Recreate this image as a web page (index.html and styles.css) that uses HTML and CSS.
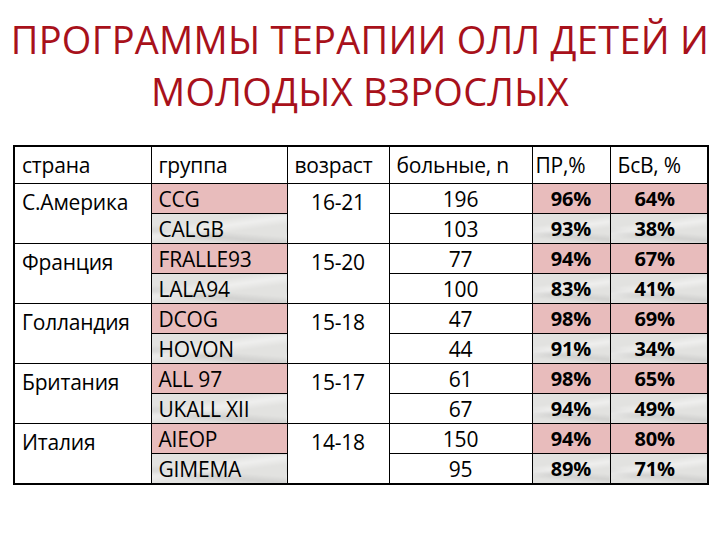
FILE: index.html
```html
<!DOCTYPE html>
<html lang="ru">
<head>
<meta charset="utf-8">
<title>Программы терапии ОЛЛ</title>
<link rel="stylesheet" href="styles.css">
</head>
<body>
<h1 class="title">ПРОГРАММЫ ТЕРАПИИ ОЛЛ ДЕТЕЙ И<br>МОЛОДЫХ ВЗРОСЛЫХ</h1>
<table class="grid">
  <colgroup>
    <col class="c-country"><col class="c-group"><col class="c-age"><col class="c-n"><col class="c-pr"><col class="c-bsv">
  </colgroup>
  <thead>
    <tr class="head">
      <th>страна</th><th>группа</th><th>возраст</th><th>больные, n</th><th class="pr-h">ПР,%</th><th>БсВ, %</th>
    </tr>
  </thead>
  <tbody>
    <tr class="r1"><td class="country" rowspan="2">С.Америка</td><td class="grp pink">CCG</td><td class="age" rowspan="2">16-21</td><td class="n">196</td><td class="pct pink">96%</td><td class="pct pink">64%</td></tr>
    <tr class="r2"><td class="grp gray">CALGB</td><td class="n">103</td><td class="pct gray">93%</td><td class="pct gray">38%</td></tr>
    <tr class="r1"><td class="country" rowspan="2">Франция</td><td class="grp pink">FRALLE93</td><td class="age" rowspan="2">15-20</td><td class="n">77</td><td class="pct pink">94%</td><td class="pct pink">67%</td></tr>
    <tr class="r2"><td class="grp gray">LALA94</td><td class="n">100</td><td class="pct gray">83%</td><td class="pct gray">41%</td></tr>
    <tr class="r1"><td class="country" rowspan="2">Голландия</td><td class="grp pink">DCOG</td><td class="age" rowspan="2">15-18</td><td class="n">47</td><td class="pct pink">98%</td><td class="pct pink">69%</td></tr>
    <tr class="r2"><td class="grp gray">HOVON</td><td class="n">44</td><td class="pct gray">91%</td><td class="pct gray">34%</td></tr>
    <tr class="r1"><td class="country" rowspan="2">Британия</td><td class="grp pink">ALL 97</td><td class="age" rowspan="2">15-17</td><td class="n">61</td><td class="pct pink">98%</td><td class="pct pink">65%</td></tr>
    <tr class="r2"><td class="grp gray">UKALL XII</td><td class="n">67</td><td class="pct gray">94%</td><td class="pct gray">49%</td></tr>
    <tr class="r1"><td class="country" rowspan="2">Италия</td><td class="grp pink">AIEOP</td><td class="age" rowspan="2">14-18</td><td class="n">150</td><td class="pct pink">94%</td><td class="pct pink">80%</td></tr>
    <tr class="r2"><td class="grp gray">GIMEMA</td><td class="n">95</td><td class="pct gray">89%</td><td class="pct gray">71%</td></tr>
  </tbody>
</table>
</body>
</html>
```
FILE: styles.css
```css
html, body {
  margin: 0;
  padding: 0;
  background: #ffffff;
}
body {
  font-family: "Open Sans", "DejaVu Sans", sans-serif;
  color: #000;
  width: 720px;
  height: 540px;
  overflow: hidden;
}
.title {
  margin: 0;
  padding-top: 13px;
  height: 145px;
  box-sizing: border-box;
  text-align: center;
  font-weight: 400;
  font-size: 38px;
  line-height: 52px;
  letter-spacing: 0.25px;
  color: #a8111b;
  white-space: nowrap;
}
.grid {
  margin-left: 13px;
  margin-top: 0;
  border-collapse: collapse;
  table-layout: fixed;
  width: 694px;
  border: 2px solid #000;
  font-size: 21px;
  letter-spacing: -0.2px;
}
.c-country { width: 137px; }
.c-group { width: 136px; }
.c-age { width: 102px; }
.c-n { width: 143px; }
.c-pr { width: 78px; }
.c-bsv { width: 98px; }
.grid th, .grid td {
  border: 1px solid #000;
  padding: 0 0 0 7px;
  white-space: nowrap;
  overflow: hidden;
  line-height: 26px;
}
.grid th {
  font-weight: 400;
  text-align: left;
  height: 36px;
}
.grid th.pr-h { padding-left: 3px; }
.grid td { height: 29px; }
.grid td.country, .grid td.age {
  vertical-align: top;
  padding-top: 5px;
}
.grid td.age {
  text-align: center;
  padding-left: 0;
}
.grid td.n {
  text-align: center;
  padding-left: 0;
}
.grid td.pct {
  text-align: center;
  padding-left: 0;
  font-weight: 700;
  font-size: 20px;
}
.grid td.pct + td.pct { padding-right: 8px; }
.pink { background: #e8bcbc; }
.gray {
  background: #e2e2e0;
  background-image:
    linear-gradient(172deg, rgba(255,255,255,0) 30%, rgba(255,255,255,0.45) 45%, rgba(255,255,255,0) 60%),
    linear-gradient(185deg, rgba(180,180,180,0) 55%, rgba(170,170,170,0.3) 70%, rgba(180,180,180,0) 85%);
}
```
